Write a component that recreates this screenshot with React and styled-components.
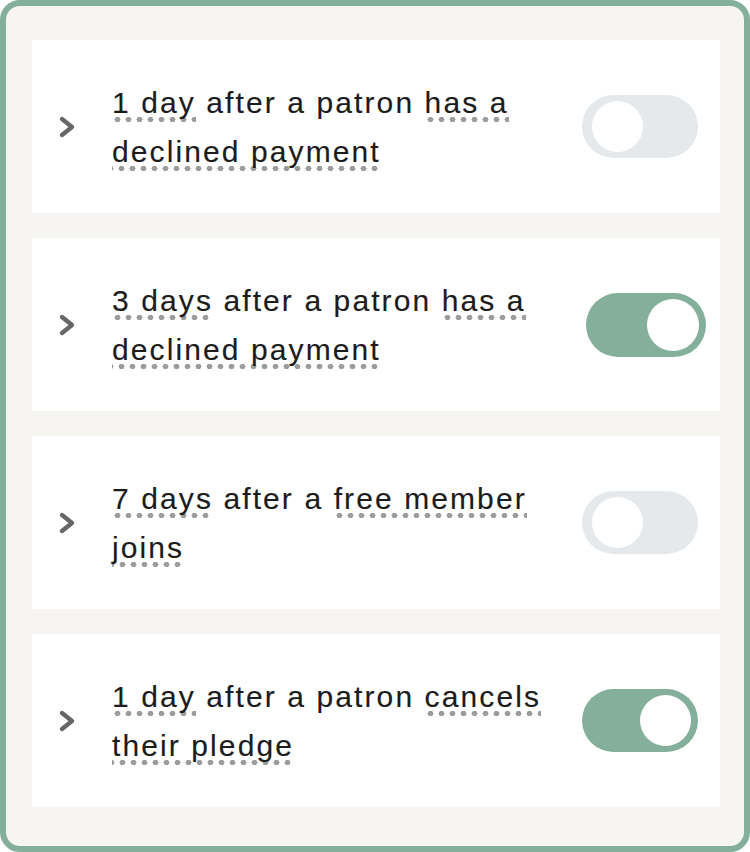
import React from "react";
import styled, { createGlobalStyle } from "styled-components";

const Global = createGlobalStyle`
  html, body { margin: 0; padding: 0; background: #ffffff; }
  body { font-family: "Liberation Sans", Arial, sans-serif; }
  * { box-sizing: border-box; }
`;

const Frame = styled.div`
  width: 750px;
  height: 852px;
  border: 6px solid #84b09b;
  border-radius: 20px;
  background: #f6f5f1;
  padding: 34px 24px 39px 26px;
  display: flex;
  flex-direction: column;
  gap: 25px;
`;

const Card = styled.div`
  height: 173px;
  background: #ffffff;
  display: flex;
  align-items: center;
  padding: 0 ${(p) => p.$rightPad}px 0 26px;
`;

const Chevron = styled.svg`
  width: 18px;
  height: 24px;
  flex-shrink: 0;
  margin-right: 36px;
`;

const Label = styled.div`
  flex: 1;
  min-width: 0;
  font-size: 30px;
  line-height: 49px;
  letter-spacing: 2.1px;
  color: #1c1c1c;
  padding-right: 16px;
  -webkit-text-stroke: 0.15px #1c1c1c;
`;

const Dotted = styled.span`
  padding-bottom: 4px;
  background-image: radial-gradient(ellipse 3.2px 2.8px at 5.5px 3.5px, #9c9c9c 88%, rgba(156,156,156,0) 100%);
  background-size: 11px 7px;
  background-repeat: repeat-x;
  background-position: 0 100%;
`;

const Track = styled.div`
  flex-shrink: 0;
  width: ${(p) => p.$w}px;
  height: ${(p) => p.$h}px;
  border-radius: 40px;
  background: ${(p) => (p.$on ? "#84b09b" : "#e6e9ec")};
  display: flex;
  align-items: center;
  justify-content: ${(p) => (p.$on ? "flex-end" : "flex-start")};
  padding: 0 ${(p) => (p.$on ? 7 : 0)}px 0 ${(p) => (p.$on ? 0 : 10)}px;
`;

const Knob = styled.div`
  width: ${(p) => p.$d}px;
  height: ${(p) => p.$d}px;
  border-radius: 50%;
  background: #ffffff;
`;

const rows = [
  { pre: "1 day", mid: " after a patron ", post: "has a declined payment", on: false, w: 116, h: 63, d: 51, rp: 22 },
  { pre: "3 days", mid: " after a patron ", post: "has a declined payment", on: true, w: 120, h: 64, d: 52, rp: 14 },
  { pre: "7 days", mid: " after a ", post: "free member joins", on: false, w: 116, h: 63, d: 51, rp: 22 },
  { pre: "1 day", mid: " after a patron ", post: "cancels their pledge", on: true, w: 116, h: 63, d: 51, rp: 22 },
];

export default function App() {
  return (
    <>
      <Global />
      <Frame>
        {rows.map((r, i) => (
          <Card key={i} $rightPad={r.rp}>
            <Chevron viewBox="0 0 18 24">
              <polyline points="4,4 14,12 4,20" fill="none" stroke="#666666" strokeWidth="4.4" strokeLinecap="round" strokeLinejoin="round" />
            </Chevron>
            <Label>
              <Dotted>{r.pre}</Dotted>
              {r.mid}
              <Dotted>{r.post}</Dotted>
            </Label>
            <Track $on={r.on} $w={r.w} $h={r.h}>
              <Knob $d={r.d} />
            </Track>
          </Card>
        ))}
      </Frame>
    </>
  );
}
